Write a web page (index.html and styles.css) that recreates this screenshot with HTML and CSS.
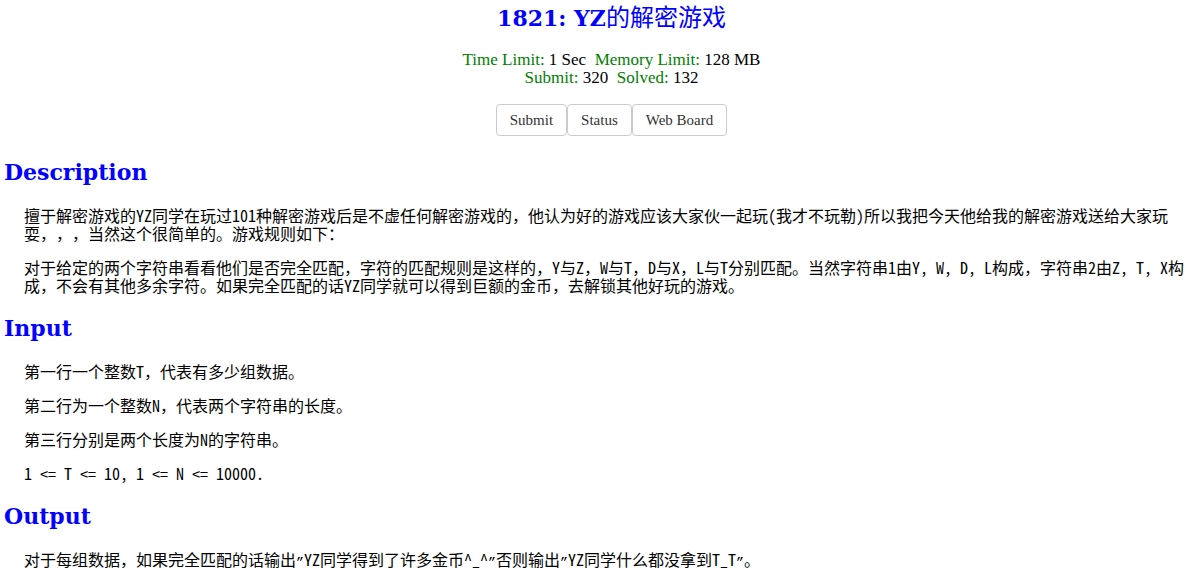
FILE: index.html
```html
<!DOCTYPE html>
<html lang="zh-CN">
<head>
    <meta charset="UTF-8">
    <title>1821: YZ的解密游戏</title>
    <link rel="stylesheet" href="styles.css">
</head>
<body>
    <div class="head">
        <h1 class="title">1821: YZ<span class="cjk">的解密游戏</span></h1>
        <div class="limits">
            <span class="green">Time Limit: </span>1 Sec&nbsp;&nbsp;<span class="green">Memory Limit: </span>128 MB<br>
            <span class="green">Submit: </span>320&nbsp;&nbsp;<span class="green">Solved: </span>132
        </div>
        <div class="btn-group">
            <a class="btn" href="#">Submit</a><a class="btn" href="#">Status</a><a class="btn" href="#">Web Board</a>
        </div>
    </div>

    <h2>Description</h2>
    <div class="content">
        <p>擅于解密游戏的YZ同学在玩过101种解密游戏后是不虚任何解密游戏的，他认为好的游戏应该大家伙一起玩(我才不玩勒)所以我把今天他给我的解密游戏送给大家玩耍，，，当然这个很简单的。游戏规则如下：</p>
        <p>对于给定的两个字符串看看他们是否完全匹配，字符的匹配规则是这样的，Y与Z，W与T，D与X，L与T分别匹配。当然字符串1由Y, W, D, L构成，字符串2由Z, T, X构成，不会有其他多余字符。如果完全匹配的话YZ同学就可以得到巨额的金币，去解锁其他好玩的游戏。</p>
    </div>

    <h2>Input</h2>
    <div class="content">
        <p>第一行一个整数T，代表有多少组数据。</p>
        <p>第二行为一个整数N，代表两个字符串的长度。</p>
        <p>第三行分别是两个长度为N的字符串。</p>
        <p>1 &lt;= T &lt;= 10, 1 &lt;= N &lt;= 10000.</p>
    </div>

    <h2>Output</h2>
    <div class="content">
        <p>对于每组数据，如果完全匹配的话输出<span class="q">”</span>YZ同学得到了许多金币^_^<span class="q">”</span>否则输出<span class="q">”</span>YZ同学什么都没拿到T_T<span class="q">”</span>。</p>
    </div>
</body>
</html>
```

FILE: styles.css
```css
body {
    margin: 0 2px 0 4px;
    font-family: "Liberation Serif", serif;
    color: #000;
    background: #fff;
}
.head {
    text-align: center;
    padding-left: 34px;
}
.title {
    margin: 0;
    padding-top: 1px;
    font-family: "DejaVu Serif", serif;
    font-size: 22px;
    line-height: 30px;
    font-weight: bold;
    color: #0000ff;
}
.title .cjk {
    font-family: "Noto Sans CJK SC", sans-serif;
    font-weight: normal;
    font-size: 24px;
    line-height: 30px;
}
.limits {
    margin-top: 18px;
    font-size: 17px;
    line-height: 18px;
}
.green {
    color: #008000;
}
.btn-group {
    margin-top: 17px;
    display: flex;
    justify-content: center;
}
.btn {
    display: block;
    height: 30px;
    line-height: 30px;
    padding: 0 13px;
    border: 1px solid #ccc;
    border-radius: 4px;
    color: #333;
    font-size: 15px;
    text-decoration: none;
    background: #fff;
}
h2 {
    margin: 22px 0 20px;
    font-family: "DejaVu Serif", serif;
    font-size: 22px;
    line-height: 28px;
    font-weight: bold;
    color: #0000ff;
}
.content + h2 {
    margin-top: 20px;
}
.content {
    padding-left: 20px;
    font-family: "Noto Sans Mono CJK SC", "Noto Sans CJK SC", monospace;
    font-size: 16px;
    line-height: 18px;
    text-spacing-trim: space-all;
}
.content p {
    margin: 16px 0;
}
.q {
    font-family: "Liberation Mono", monospace;
    font-size: 13.33px;
}
```
